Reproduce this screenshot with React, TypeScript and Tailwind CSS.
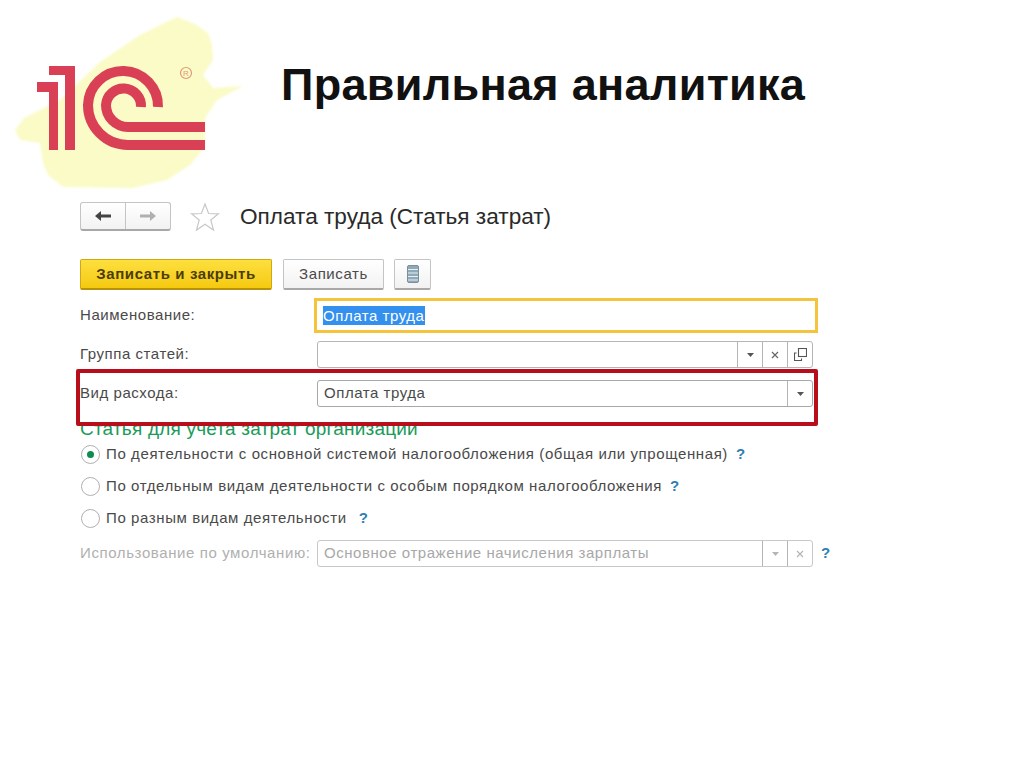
const font = { fontFamily: '"Liberation Sans", Arial, sans-serif' };

function Logo() {
  return (
    <svg width="260" height="200" viewBox="0 0 260 200" className="shrink-0 block">
      <defs>
        <filter id="soft" x="-5%" y="-5%" width="110%" height="110%"><feGaussianBlur stdDeviation="1" /></filter>
      </defs>
      <path filter="url(#soft)" d="M15 130 L24 118 L60 100 L100 62 L140 35 L177 17 L195 24 L208 33 L212 45 L213 60 L203 75 L213 88 L243 86 L217 100 L205 118 L205 147 L190 165 L167 180 L133 188 L63 187 L48 175 L43 163 L40 143 L20 140 Z" fill="#fbfbc8" />
      <path d="M49 66 H75 V150 H65 V75 H49 Z" fill="#d93f55" />
      <path d="M37 82 H58 V150 H49 V92 H37 Z" fill="#d93f55" />
      <path d="M158 107 A35 35 0 0 0 88 105 A40 40 0 0 0 128 145 H205" fill="none" stroke="#d93f55" strokeWidth="10" />
      <path d="M141 107 A17.5 17.5 0 0 0 106 105 A22 22 0 0 0 128 127 H205" fill="none" stroke="#d93f55" strokeWidth="10" />
      <circle cx="186" cy="73" r="5.5" fill="none" stroke="#dc9a78" strokeWidth="1.2" />
      <text x="186" y="76" textAnchor="middle" fontSize="8" fill="#dc9a78" fontFamily="Liberation Sans">R</text>
    </svg>
  );
}

function Caret({ light }: { light?: boolean }) {
  return (
    <svg width="7" height="4" viewBox="0 0 7 4">
      <path d="M0 0 H7 L3.5 4 Z" fill={light ? "#b5b5b5" : "#555"} />
    </svg>
  );
}

function Cross({ light }: { light?: boolean }) {
  return (
    <svg width="8" height="8" viewBox="0 0 8 8">
      <path d="M1 1 L7 7 M7 1 L1 7" stroke={light ? "#b5b5b5" : "#666"} strokeWidth="1.2" />
    </svg>
  );
}

function Cell({ children }: { children: React.ReactNode }) {
  return <div className="w-[25px] h-full flex items-center justify-center border-l border-[#b5b5b5]">{children}</div>;
}

function Help({ className }: { className: string }) {
  return <span className={`font-bold text-[#2f7fb5] text-[15px] ${className}`}>?</span>;
}

function Radio({ checked, text, gap }: { checked?: boolean; text: string; gap: string }) {
  return (
    <div className="h-[32px] flex items-center">
      <div className="ml-[1px] w-[19px] h-[19px] rounded-full border border-[#b0b0b0] flex items-center justify-center mr-[6px] bg-white">
        {checked && <div className="w-[7px] h-[7px] rounded-full bg-[#0f8a50]" />}
      </div>
      <span className="text-[15px] text-[#4a4a4a] tracking-[0.6px] whitespace-nowrap">{text}</span>
      <Help className={gap} />
    </div>
  );
}

export default function App() {
  return (
    <div className="w-[1024px] h-[767px] bg-white overflow-hidden" style={font}>
      <header className="h-[200px] flex">
        <Logo />
        <h1 className="ml-[21px] mt-[60px] text-[45px] leading-[50px] font-bold text-[#111] tracking-[0.3px] whitespace-nowrap">Правильная аналитика</h1>
      </header>

      <main className="relative pl-[80px]">
        <div className="h-[29px] mt-[2px] flex items-center">
          <div className="w-[91px] h-[29px] flex rounded-[3px] border border-[#c4c4c4] border-b-[2px] border-b-[#a8a8a8] bg-gradient-to-b from-white to-[#f2f2f2]">
            <div className="w-[45px] flex items-center justify-center border-r border-[#c4c4c4]">
              <svg width="18" height="12" viewBox="0 0 18 12"><path d="M1 6 L7 1 V4.5 H17 V7.5 H7 V11 Z" fill="#444" /></svg>
            </div>
            <div className="flex-1 flex items-center justify-center">
              <svg width="18" height="12" viewBox="0 0 18 12"><path d="M17 6 L11 1 V4.5 H1 V7.5 H11 V11 Z" fill="#b0b0b0" /></svg>
            </div>
          </div>
          <svg width="30" height="30" viewBox="0 0 30 30" className="ml-[19px]">
            <path d="M15 2 L18.6 11.5 L28.5 11.8 L20.8 18 L23.5 28 L15 22.3 L6.5 28 L9.2 18 L1.5 11.8 L11.4 11.5 Z" fill="#fff" stroke="#c8c8c8" strokeWidth="1.2" />
          </svg>
          <span className="ml-[20px] text-[22.6px] text-[#2a2a2a] whitespace-nowrap">Оплата труда (Статья затрат)</span>
        </div>

        <div className="mt-[28px] h-[31px] flex">
          <button className="w-[192px] h-[31px] rounded-[2px] border border-[#d2a810] border-b-[2px] border-b-[#b8920c] bg-gradient-to-b from-[#fde03c] to-[#f5c90c] text-[15px] font-bold text-[#4a3e08] tracking-[0.6px]">Записать и закрыть</button>
          <button className="ml-[11px] w-[101px] h-[31px] rounded-[2px] border border-[#c4c4c4] border-b-[2px] border-b-[#a8a8a8] bg-gradient-to-b from-white to-[#f2f2f2] text-[15px] text-[#4a4a4a] tracking-[0.6px]">Записать</button>
          <button className="ml-[10px] w-[37px] h-[31px] rounded-[2px] border border-[#c4c4c4] border-b-[2px] border-b-[#a8a8a8] bg-gradient-to-b from-white to-[#f2f2f2] flex items-center justify-center">
            <svg width="12" height="18" viewBox="0 0 12 18">
              <rect x="0.5" y="0.5" width="11" height="17" rx="1.5" fill="#8fa9b8" stroke="#7b8e99" />
              <path d="M1 4.5 H11 M1 8 H11 M1 11.5 H11 M1 15 H11" stroke="#e8eef2" strokeWidth="1" />
            </svg>
          </button>
        </div>

        <div className="mt-[8px] h-[35px] flex items-center">
          <span className="w-[234px] text-[15px] text-[#4a4a4a] tracking-[0.55px]">Наименование:</span>
          <div className="w-[504px] h-[35px] border-[3px] border-[#f5c33c] flex items-center pl-[6px] text-[15px] tracking-[0.55px]">
            <span className="bg-[#3390ee] text-white leading-[19px]">Оплата труда</span>
          </div>
        </div>

        <div className="mt-[8px] h-[27px] flex items-center">
          <span className="w-[237px] text-[15px] text-[#4a4a4a] tracking-[0.55px]">Группа статей:</span>
          <div className="w-[496px] h-[27px] rounded-[3px] border border-[#b5b5b5] flex justify-end">
            <Cell><Caret /></Cell>
            <Cell><Cross /></Cell>
            <Cell>
              <svg width="13" height="13" viewBox="0 0 13 13" fill="none" stroke="#555" strokeWidth="1.1">
                <rect x="4.5" y="0.5" width="8" height="8" />
                <path d="M2.5 5 H0.5 V12.5 H7.5 V10.5" />
              </svg>
            </Cell>
          </div>
        </div>

        <div className="mt-[12px] h-[27px] flex items-center">
          <span className="w-[237px] text-[15px] text-[#4a4a4a] tracking-[0.55px]">Вид расхода:</span>
          <div className="w-[496px] h-[27px] rounded-[3px] border border-[#a8a8a8] flex items-center justify-between pl-[6px] text-[15px] text-[#4a4a4a] tracking-[0.55px]">
            <span>Оплата труда</span>
            <Cell><Caret /></Cell>
          </div>
        </div>

        <div className="mt-[12px] h-[20px] text-[19px] leading-[20px] text-[#1b9a5a] tracking-[0.2px] whitespace-nowrap">Статья для учета затрат организации</div>

        <div className="-mt-[1px]">
          <Radio checked text="По деятельности с основной системой налогообложения (общая или упрощенная)" gap="ml-[8px]" />
          <Radio text="По отдельным видам деятельности с особым порядком налогообложения" gap="ml-[8px]" />
          <Radio text="По разным видам деятельности" gap="ml-[12px]" />
        </div>

        <div className="mt-[6px] h-[27px] flex items-center">
          <span className="w-[237px] text-[15px] text-[#b0b0b0] tracking-[0.6px] whitespace-nowrap">Использование по умолчанию:</span>
          <div className="w-[496px] h-[27px] rounded-[3px] border border-[#c8c8c8] flex items-center justify-between pl-[6px] text-[15px] text-[#a8a8a8] tracking-[0.55px]">
            <span>Основное отражение начисления зарплаты</span>
            <div className="flex h-full">
              <Cell><Caret light /></Cell>
              <Cell><Cross light /></Cell>
            </div>
          </div>
          <Help className="ml-[8px]" />
        </div>

        <div className="absolute left-[76px] top-[167px] w-[742px] h-[57px] rounded-[2px] border-[4px] border-[#b80d1a]" />
      </main>
    </div>
  );
}
